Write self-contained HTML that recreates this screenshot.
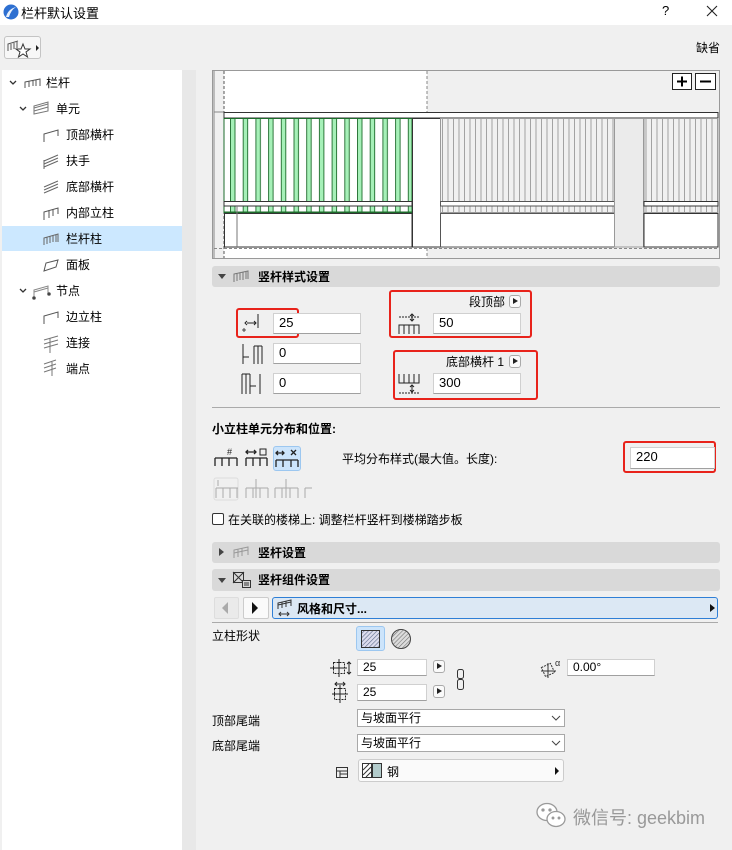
<!DOCTYPE html>
<html><head><meta charset="utf-8">
<style>
*{margin:0;padding:0;box-sizing:border-box}
body{width:732px;height:850px;background:#f0f0f0;font-family:"Liberation Sans","Noto Sans CJK SC",sans-serif;font-size:12px;color:#000;position:relative;overflow:hidden}
.a{position:absolute;white-space:nowrap}
.inp{position:absolute;background:#fff;border:1px solid #d0d0d0;border-bottom-color:#a0a0a0;font-size:13px;padding-left:5px;line-height:18px}
.red{position:absolute;border:2px solid #e8231b;border-radius:3px}
.bar{position:absolute;left:212px;width:508px;background:#d9d9d9;border-radius:3px;font-weight:bold;font-size:12px}
.tri{position:absolute;width:0;height:0}
.ab{position:absolute;width:12px;height:13px;border:1px solid #aaa;border-radius:3px;background:#fafafa}
.ab:after{content:"";position:absolute;left:3px;top:2px;border-left:5px solid #222;border-top:3.5px solid transparent;border-bottom:3.5px solid transparent}
.dd{position:absolute;background:#fff;border:1px solid #a8a8a8;font-size:12px;padding-left:3px;line-height:16px}
.tree div{position:absolute;font-size:12px}
</style></head><body>
<!-- title bar -->
<div class="a" style="left:0;top:0;width:732px;height:25px;background:#fff"></div>
<svg class="a" style="left:3px;top:4px" width="16" height="16"><circle cx="8" cy="8" r="7.5" fill="#2d6fd1"/><path d="M3 13 Q5 5 13 3 Q8 6 6 13Z" fill="#e8f0fb"/></svg>
<div class="a" style="left:21px;top:3px;font-size:13px">栏杆默认设置</div>
<div class="a" style="left:662px;top:3px;font-size:13px">?</div>
<svg class="a" style="left:705px;top:4px" width="14" height="14"><path d="M2 2 L12 12 M12 2 L2 12" stroke="#222" stroke-width="1.1"/></svg>
<!-- fav button -->
<div class="a" style="left:4px;top:36px;width:37px;height:23px;border:1px solid #c4c4c4;border-radius:3px;background:#f7f7f7"></div>
<svg class="a" style="left:6px;top:38px" width="34" height="20"><path d="M2 13 L2 6 L12 3 M5 12 V6 M8 11 V5 M11 10 V4" stroke="#555" fill="none"/><path d="M17 6 L19 11 L24 11 L20 14 L21.5 19 L17 16 L12.5 19 L14 14 L10 11 L15 11Z" fill="#fff" stroke="#333"/><path d="M30 7 L33 10 L30 13Z" fill="#222"/></svg>
<div class="a" style="left:696px;top:39px;font-size:12px">缺省</div>
<!-- left tree -->
<div class="a" style="left:2px;top:70px;width:180px;height:780px;background:#fff"></div>
<div class="a" style="left:182px;top:70px;width:14px;height:780px;background:#e8e8e8"></div>
<div class="a" style="left:2px;top:226px;width:180px;height:25px;background:#cce8ff"></div>
<svg class="a" style="left:0;top:70px" width="182" height="310" fill="none" stroke="#555" stroke-width="1">
<path d="M10 11 l3 3 l3 -3 M20 37 l3 3 l3 -3 M20 219 l3 3 l3 -3" stroke="#333" stroke-width="1.3"/>
<path d="M25 18 V12 L40 9 V16 M29 17 V11 M33 16 V10 M36 16 V10 M25 12 L40 9"/>
<path d="M34 44 V36 L48 32 V41Z M34 38 L48 34 M34 41 L48 37" stroke="#777"/>
<path d="M44 72 V64 L58 60 V66" />
<path d="M44 97 L58 91 M44 94 L58 88 M44 91 L58 85 M44 99 V90" stroke="#666"/>
<path d="M44 123 L58 117 M44 120 L58 114 M44 117 L58 111" stroke="#666"/>
<path d="M44 150 V142 L58 138 V144 M49 148 V140 M53 146 V139"/>
<path d="M44 175 V168 L58 164 V172 M47 174 V167 M50 173 V166 M53 172 V165 M56 172 V165" stroke="#666"/>
<path d="M44 201 L46 193 L58 190 L56 197Z"/>
<path d="M34 228 V220 L48 216 V224 M34 222 L48 218" stroke="#888"/><circle cx="34" cy="228" r="1.3" fill="#333"/><circle cx="49" cy="224" r="1.3" fill="#333"/>
<path d="M44 254 V246 L58 242 V248"/>
<path d="M44 278 L58 274 M44 274 L58 270 M44 270 L58 266 M50 283 V268" stroke="#777"/>
<path d="M44 302 L56 298 M44 298 L56 294 M44 294 L56 290 M52 306 V292" stroke="#777"/>
</svg>
<div class="tree">
<div style="left:46px;top:74px">栏杆</div>
<div style="left:56px;top:100px">单元</div>
<div style="left:66px;top:126px">顶部横杆</div>
<div style="left:66px;top:152px">扶手</div>
<div style="left:66px;top:178px">底部横杆</div>
<div style="left:66px;top:204px">内部立柱</div>
<div style="left:66px;top:230px">栏杆柱</div>
<div style="left:66px;top:256px">面板</div>
<div style="left:56px;top:282px">节点</div>
<div style="left:66px;top:308px">边立柱</div>
<div style="left:66px;top:334px">连接</div>
<div style="left:66px;top:360px">端点</div>
</div>
<!-- preview -->
<svg class="a" style="left:0;top:0" width="732" height="300">
<defs>
<pattern id="g" x="230" y="0" width="12.7" height="10" patternUnits="userSpaceOnUse"><rect x="0" y="0" width="12.7" height="10" fill="#fff"/><rect x="0.5" y="-1" width="4.5" height="12" fill="#a6f0b8" stroke="#1d6b2b" stroke-width="0.9"/></pattern>
<pattern id="gr" x="440" y="0" width="5.5" height="10" patternUnits="userSpaceOnUse"><rect width="5.5" height="10" fill="#f0f0f0"/><line x1="2.5" y1="0" x2="2.5" y2="10" stroke="#999" stroke-width="0.9"/></pattern>
</defs>
<rect x="212.5" y="70.5" width="507" height="188" fill="#f0f0f0" stroke="#999"/>
<rect x="224" y="71" width="203" height="41" fill="#fff"/>
<rect x="224" y="248" width="203" height="10" fill="#fff"/>
<line x1="214" y1="71" x2="214" y2="258" stroke="#888"/>
<line x1="214" y1="112" x2="224" y2="112" stroke="#888"/>
<line x1="224" y1="71" x2="224" y2="258" stroke="#555" stroke-dasharray="3,2"/>
<line x1="427" y1="71" x2="427" y2="112" stroke="#888" stroke-dasharray="3,2"/>
<line x1="427" y1="248" x2="427" y2="258" stroke="#888" stroke-dasharray="3,2"/>
<line x1="214" y1="248.5" x2="719" y2="248.5" stroke="#888" stroke-dasharray="3,2"/>
<rect x="224" y="112.5" width="494" height="5.5" fill="#fff" stroke="#333"/>
<rect x="224" y="118.5" width="188" height="94" fill="url(#g)" stroke="#1d6b2b"/>
<rect x="224" y="201.5" width="188" height="4.5" fill="#fff" stroke="#333"/>
<line x1="224" y1="212.5" x2="412" y2="212.5" stroke="#1d6b2b" stroke-width="2"/>
<rect x="224.5" y="213.5" width="187.5" height="33.5" fill="#fff" stroke="#333"/>
<line x1="237" y1="206" x2="237" y2="247" stroke="#777"/>
<rect x="412.5" y="118.5" width="28" height="128.5" fill="#fff" stroke="#333"/>
<rect x="440.5" y="118.5" width="174" height="94" fill="url(#gr)" stroke="#999"/>
<rect x="440.5" y="201.5" width="174" height="4.5" fill="#fff" stroke="#555"/>
<rect x="440.5" y="213.5" width="174" height="33.5" fill="#fff" stroke="#555"/>
<rect x="614.5" y="118.5" width="29" height="128.5" fill="#ebebeb" stroke="#999"/>
<rect x="644" y="118.5" width="74" height="94" fill="url(#gr)" stroke="#999"/>
<rect x="644" y="201.5" width="74" height="4.5" fill="#fff" stroke="#333"/>
<rect x="644" y="213.5" width="74" height="33.5" fill="#fff" stroke="#333"/>
<rect x="672.5" y="73.5" width="19" height="16" fill="#fff" stroke="#222"/>
<path d="M677 81.5 H687 M682 76.5 V86.5" stroke="#000" stroke-width="2"/>
<rect x="695.5" y="73.5" width="20" height="16" fill="#fff" stroke="#222"/>
<path d="M700 81.5 H711" stroke="#000" stroke-width="2"/>
</svg>
<!-- section 1 -->
<div class="bar" style="top:266px;height:21px"></div>
<div class="tri" style="left:218px;top:274px;border-top:5px solid #444;border-left:4px solid transparent;border-right:4px solid transparent"></div>
<svg class="a" style="left:232px;top:268px" width="18" height="16"><path d="M2 14 V6 L16 3 V11 M5 13 V5 M8 12 V5 M11 12 V4 M14 11 V3" fill="none" stroke="#777"/></svg>
<div class="a" style="left:258px;top:268px;font-weight:bold">竖杆样式设置</div>
<div class="red" style="left:236px;top:308px;width:63px;height:30px"></div>
<div class="inp" style="left:273px;top:313px;width:88px;height:21px">25</div>
<div class="inp" style="left:273px;top:343px;width:88px;height:21px">0</div>
<div class="inp" style="left:273px;top:373px;width:88px;height:21px">0</div>
<svg class="a" style="left:240px;top:312px" width="26" height="86" fill="none" stroke="#222"><path d="M18 2 V16 M7 11 H16 M7 9 L5 11 L7 13 M14 9 L16 11 L14 13" /><path d="M4 16 V20 M2 18 H6" stroke-width="0.8"/><path d="M3 32 V52 M3 45 H9 M14 34 V52 M18 34 V52 M22 34 V52 M14 34 H22" stroke-dasharray="0"/><path d="M2 62 V82 M6 62 V82 M10 62 V82 M2 62 H10 M10 74 H16 M20 62 V82" /></svg>
<div class="red" style="left:389px;top:290px;width:143px;height:48px"></div>
<div class="a" style="left:469px;top:293px">段顶部</div>
<div class="ab" style="left:509px;top:295px"></div>
<svg class="a" style="left:398px;top:313px" width="26" height="22" fill="none" stroke="#222"><path d="M1 4 H21" stroke-dasharray="2,1"/><path d="M14 1 V8 M12 3 L14 1 L16 3 M12 6 L14 8 L16 6" /><path d="M1 21 V12 H21 V21 M6 12 V21 M11 12 V21 M16 12 V21"/></svg>
<div class="inp" style="left:433px;top:313px;width:88px;height:21px">50</div>
<div class="red" style="left:393px;top:350px;width:145px;height:50px"></div>
<div class="a" style="left:446px;top:353px">底部横杆 1</div>
<div class="ab" style="left:509px;top:355px"></div>
<svg class="a" style="left:398px;top:373px" width="26" height="22" fill="none" stroke="#222"><path d="M1 1 V10 H21 V1 M6 1 V10 M11 1 V10 M16 1 V10"/><path d="M1 20 H21" stroke-dasharray="2,1"/><path d="M14 12 V19 M12 14 L14 12 L16 14 M12 17 L14 19 L16 17"/></svg>
<div class="inp" style="left:433px;top:373px;width:88px;height:21px">300</div>
<div class="a" style="left:212px;top:407px;width:508px;height:1px;background:#aaa"></div>
<!-- distribution -->
<div class="a" style="left:212px;top:420px;font-weight:bold">小立柱单元分布和位置:</div>
<div class="a" style="left:273px;top:446px;width:28px;height:25px;background:#cce4fb;border:1px solid #9cc7f0;border-radius:3px"></div>
<svg class="a" style="left:212px;top:446px" width="100" height="56" fill="none" stroke="#222" stroke-width="1.3">
<path d="M3 12 H25 M3 12 V20 M10 12 V20 M17 12 V20 M25 12 V20"/><text x="15" y="9" font-size="9" fill="#222" stroke="none" font-family="Liberation Sans">#</text>
<path d="M34 12 H55 M34 12 V20 M41 12 V20 M48 12 V20 M55 12 V20 M34 6 H44 M36 4 L34 6 L36 8 M42 4 L44 6 L42 8"/><rect x="48" y="3" width="6" height="6" stroke-width="1"/>
<path d="M64 14 H86 M64 14 V21 M71 14 V21 M79 14 V21 M86 14 V21 M64 7 H72 M66 5 L64 7 L66 9 M70 5 L72 7 L70 9 M79 4 L84 9 M84 4 L79 9"/>
<g stroke="#aaa" stroke-width="1"><rect x="2" y="32" width="24" height="22" rx="2" stroke="#ddd"/><path d="M4 42 H26 M4 42 V52 M11 42 V52 M18 42 V52 M25 42 V52 M6 34 V40"/>
<path d="M34 42 H56 M34 42 V52 M41 42 V52 M48 42 V52 M56 42 V52 M44 33 V52"/>
<path d="M63 42 H86 M63 42 V52 M70 42 V52 M78 42 V52 M86 42 V52 M74 33 V52"/>
<path d="M93 42 H100 M93 42 V52"/></g>
</svg>
<div class="a" style="left:342px;top:450px">平均分布样式(最大值。长度):</div>
<div class="red" style="left:623px;top:441px;width:93px;height:32px"></div>
<div class="inp" style="left:630px;top:447px;width:85px;height:22px">220</div>
<div class="a" style="left:212px;top:513px;width:12px;height:12px;border:1px solid #333;border-radius:2px;background:#fff"></div>
<div class="a" style="left:228px;top:511px">在关联的楼梯上: 调整栏杆竖杆到楼梯踏步板</div>
<!-- bars -->
<div class="bar" style="top:542px;height:21px"></div>
<div class="tri" style="left:219px;top:548px;border-left:5px solid #444;border-top:4px solid transparent;border-bottom:4px solid transparent"></div>
<svg class="a" style="left:232px;top:544px" width="18" height="16"><path d="M2 14 V6 L16 3 V11 M6 13 V5 M10 12 V4 M2 9 L16 6" fill="none" stroke="#999"/></svg>
<div class="a" style="left:258px;top:544px;font-weight:bold">竖杆设置</div>
<div class="bar" style="top:569px;height:22px"></div>
<div class="tri" style="left:218px;top:578px;border-top:5px solid #444;border-left:4px solid transparent;border-right:4px solid transparent"></div>
<svg class="a" style="left:232px;top:571px" width="20" height="18" fill="none" stroke="#333"><rect x="1.5" y="1.5" width="10" height="10"/><path d="M1 1 L12 12 M12 1 L1 12"/><rect x="10.5" y="9.5" width="8" height="7" fill="#d9d9d9"/><path d="M12 12 H17 M12 14 H17"/></svg>
<div class="a" style="left:258px;top:571px;font-weight:bold">竖杆组件设置</div>
<!-- nav row -->
<div class="a" style="left:214px;top:597px;width:25px;height:22px;background:#eaeaea;border:1px solid #ddd;border-radius:2px"></div>
<div class="tri" style="left:222px;top:602px;border-right:6px solid #aaa;border-top:6px solid transparent;border-bottom:6px solid transparent"></div>
<div class="a" style="left:243px;top:597px;width:26px;height:22px;background:#fafafa;border:1px solid #ccc;border-radius:2px"></div>
<div class="tri" style="left:252px;top:602px;border-left:6px solid #111;border-top:6px solid transparent;border-bottom:6px solid transparent"></div>
<div class="a" style="left:272px;top:597px;width:446px;height:22px;background:#dce8f4;border:1px solid #2f7fd6;border-radius:3px"></div>
<svg class="a" style="left:276px;top:599px" width="18" height="18" fill="none" stroke="#333"><path d="M2 10 V4 L15 1 V7 M2 6 L15 3 M6 9 V3 M10 8 V2 M3 15 H13 M5 13 L3 15 L5 17 M11 13 L13 15 L11 17"/></svg>
<div class="a" style="left:297px;top:600px;font-weight:bold">风格和尺寸...</div>
<div class="tri" style="left:710px;top:604px;border-left:5px solid #111;border-top:4px solid transparent;border-bottom:4px solid transparent"></div>
<div class="a" style="left:212px;top:622px;width:506px;height:1px;background:#aaa"></div>
<!-- shape -->
<div class="a" style="left:212px;top:627px">立柱形状</div>
<div class="a" style="left:356px;top:626px;width:29px;height:25px;background:#cce4fb;border:1px solid #9cc7f0;border-radius:3px"></div>
<svg class="a" style="left:356px;top:626px" width="60" height="26">
<defs><pattern id="h" width="3" height="3" patternUnits="userSpaceOnUse" patternTransform="rotate(45)"><rect width="3" height="3" fill="#dde"/><line x1="0" y1="0" x2="0" y2="3" stroke="#5a6a8a" stroke-width="1.2"/></pattern>
<pattern id="h2" width="3" height="3" patternUnits="userSpaceOnUse" patternTransform="rotate(45)"><rect width="3" height="3" fill="#ddd"/><line x1="0" y1="0" x2="0" y2="3" stroke="#777" stroke-width="1.2"/></pattern></defs>
<rect x="5.5" y="4.5" width="18" height="17" fill="url(#h)" stroke="#333"/>
<circle cx="45" cy="13" r="9.5" fill="url(#h2)" stroke="#444"/>
</svg>
<svg class="a" style="left:330px;top:658px" width="22" height="46" fill="none" stroke="#222"><rect x="3.5" y="4.5" width="11" height="11" stroke-dasharray="2,1"/><path d="M9 1 V19 M0 10 H17 M19 4 V16 M17 6 L19 4 L21 6 M17 14 L19 16 L21 14"/><rect x="4.5" y="30.5" width="11" height="11" stroke-dasharray="2,1"/><path d="M10 27 V45 M2 36 H18 M5 26 H15 M7 24 L5 26 L7 28 M13 24 L15 26 L13 28"/></svg>
<div class="inp" style="left:357px;top:659px;width:70px;height:17px;font-size:12px;line-height:15px">25</div>
<div class="ab" style="left:433px;top:660px"></div>
<div class="inp" style="left:357px;top:684px;width:70px;height:17px;font-size:12px;line-height:15px">25</div>
<div class="ab" style="left:433px;top:685px"></div>
<svg class="a" style="left:455px;top:668px" width="12" height="24" fill="none" stroke="#333"><rect x="2.5" y="1.5" width="6" height="9" rx="2"/><rect x="2.5" y="11.5" width="6" height="10" rx="2"/></svg>
<svg class="a" style="left:540px;top:658px" width="24" height="22" fill="none" stroke="#333"><rect x="3" y="7" width="10" height="10" transform="rotate(-25 8 12)" stroke-dasharray="2,1"/><path d="M1 13 H16 M8 5 V20"/><text x="15" y="8" font-size="9" fill="#333" stroke="none" font-family="Liberation Sans">α</text></svg>
<div class="inp" style="left:567px;top:659px;width:88px;height:17px;font-size:12px;line-height:15px">0.00°</div>
<div class="a" style="left:212px;top:712px">顶部尾端</div>
<div class="dd" style="left:357px;top:709px;width:208px;height:18px">与坡面平行</div>
<svg class="a" style="left:550px;top:713px" width="12" height="10"><path d="M2 3 L6 7 L10 3" fill="none" stroke="#444"/></svg>
<div class="a" style="left:212px;top:737px">底部尾端</div>
<div class="dd" style="left:357px;top:734px;width:208px;height:18px">与坡面平行</div>
<svg class="a" style="left:550px;top:738px" width="12" height="10"><path d="M2 3 L6 7 L10 3" fill="none" stroke="#444"/></svg>
<svg class="a" style="left:335px;top:765px" width="14" height="14" fill="none" stroke="#333"><rect x="1.5" y="2.5" width="11" height="10"/><path d="M1.5 6 H12.5 M5 6 V12.5 M5 9 H12.5"/></svg>
<div class="a" style="left:358px;top:759px;width:206px;height:23px;background:#fafafa;border:1px solid #ccc;border-radius:3px"></div>
<svg class="a" style="left:361px;top:762px" width="24" height="18"><rect x="1.5" y="1.5" width="9" height="14" fill="#fff" stroke="#333"/><path d="M2 8 L8 2 M2 13 L10 5 M5 15 L10 10" stroke="#333"/><rect x="11.5" y="1.5" width="9" height="14" fill="#b3cccc" stroke="#333"/></svg>
<div class="a" style="left:387px;top:763px">钢</div>
<div class="tri" style="left:555px;top:767px;border-left:4px solid #111;border-top:4px solid transparent;border-bottom:4px solid transparent"></div>
<!-- watermark -->
<svg class="a" style="left:535px;top:801px" width="32" height="28" fill="none" stroke="#9a9a9a" stroke-width="1.3"><ellipse cx="12" cy="11" rx="10" ry="8.5" fill="#fff"/><ellipse cx="21" cy="18" rx="9" ry="7.5" fill="#fff"/><circle cx="8" cy="9" r="1" fill="#9a9a9a"/><circle cx="15" cy="9" r="1" fill="#9a9a9a"/><circle cx="18" cy="17" r="0.8" fill="#9a9a9a"/><circle cx="24" cy="17" r="0.8" fill="#9a9a9a"/></svg>
<div class="a" style="left:573px;top:804px;font-size:18px;color:#999">微信号: geekbim</div>
</body></html>
